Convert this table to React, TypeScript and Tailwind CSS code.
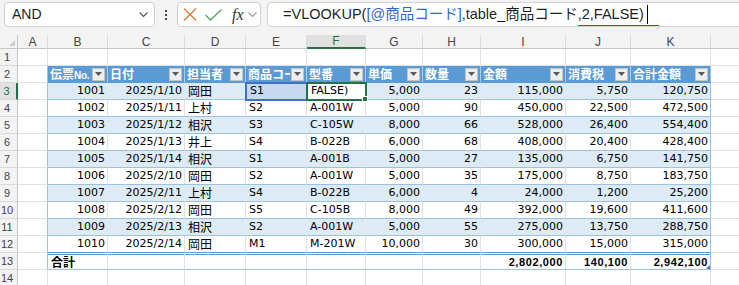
import React from 'react';

const cols = ['A', 'B', 'C', 'D', 'E', 'F', 'G', 'H', 'I', 'J', 'K', ''];

const headers = ['伝票', '日付', '担当者', '商品コード', '型番', '単価', '数量', '金額', '消費税', '合計金額'];

const data: string[][] = [
  ['1001', '2025/1/10', '岡田', 'S1', 'FALSE)', '5,000', '23', '115,000', '5,750', '120,750'],
  ['1002', '2025/1/11', '上村', 'S2', 'A-001W', '5,000', '90', '450,000', '22,500', '472,500'],
  ['1003', '2025/1/12', '相沢', 'S3', 'C-105W', '8,000', '66', '528,000', '26,400', '554,400'],
  ['1004', '2025/1/13', '井上', 'S4', 'B-022B', '6,000', '68', '408,000', '20,400', '428,400'],
  ['1005', '2025/1/14', '相沢', 'S1', 'A-001B', '5,000', '27', '135,000', '6,750', '141,750'],
  ['1006', '2025/2/10', '岡田', 'S2', 'A-001W', '5,000', '35', '175,000', '8,750', '183,750'],
  ['1007', '2025/2/11', '上村', 'S4', 'B-022B', '6,000', '4', '24,000', '1,200', '25,200'],
  ['1008', '2025/2/12', '岡田', 'S5', 'C-105B', '8,000', '49', '392,000', '19,600', '411,600'],
  ['1009', '2025/2/13', '相沢', 'S2', 'A-001W', '5,000', '55', '275,000', '13,750', '288,750'],
  ['1010', '2025/2/14', '岡田', 'M1', 'M-201W', '10,000', '30', '300,000', '15,000', '315,000'],
];

const rightAligned = [true, true, false, false, false, true, true, true, true, true];

const emptyCell = 'bg-white border-r border-b border-r-[#e1e1e1] border-b-[#e1e1e1]';
const aTableCell = 'bg-white border-r border-b border-r-[#9bc2e6] border-b-[#e1e1e1]';

const colHdr =
  "flex items-center justify-center bg-[#f3f3f3] border-r border-b border-r-[#dadada] border-b-[#c6c6c6] text-[12px] text-[#444] font-[family-name:'Liberation_Sans',sans-serif]";
const colHdrActive =
  "flex items-center justify-center bg-[#e1e1e1] border-r border-b-2 border-r-[#dadada] border-b-[#217346] text-[12px] text-[#217346] font-[family-name:'Liberation_Sans',sans-serif]";

const rowHdr =
  "flex items-center justify-center pr-[3px] bg-[#f3f3f3] border-r border-b border-r-[#c6c6c6] border-b-[#dadada] text-[11px] text-[#444] font-[family-name:'Liberation_Sans',sans-serif]";
const rowHdrActive =
  "flex items-center justify-center pr-[3px] bg-[#e1e1e1] border-r-2 border-b border-r-[#217346] border-b-[#dadada] text-[11px] text-[#217346] font-[family-name:'Liberation_Sans',sans-serif]";

function dataCls(band: boolean, last: boolean, rowBottom: string) {
  if (rowBottom === 'strong') {
    if (last) return band ? 'bg-[#ddebf7] border-r border-b border-r-[#9bc2e6] border-b-[#5b9bd5]' : 'bg-white border-r border-b border-r-[#9bc2e6] border-b-[#5b9bd5]';
    return band ? 'bg-[#ddebf7] border-r border-b border-r-[#ddebf7] border-b-[#5b9bd5]' : 'bg-white border-r border-b border-r-[#e1e1e1] border-b-[#5b9bd5]';
  }
  if (last) return band ? 'bg-[#ddebf7] border-r border-b border-r-[#9bc2e6] border-b-[#9bc2e6]' : 'bg-white border-r border-b border-r-[#9bc2e6] border-b-[#9bc2e6]';
  return band ? 'bg-[#ddebf7] border-r border-b border-r-[#ddebf7] border-b-[#9bc2e6]' : 'bg-white border-r border-b border-r-[#e1e1e1] border-b-[#9bc2e6]';
}

function FilterButton() {
  return (
    <div className="shrink-0 ml-auto w-[13px] h-[13px] bg-[#eeeeee] border border-[#c4c4c4] flex items-center justify-center">
      <svg width="7" height="4" viewBox="0 0 7 4">
        <polygon points="0,0 7,0 3.5,4" fill="#5a5a5a" />
      </svg>
    </div>
  );
}

function Sheet() {
  const cells: React.ReactNode[] = [];
  cells.push(
    <div key="corner" className="bg-[#f3f3f3] border-r border-b border-r-[#c6c6c6] border-b-[#c6c6c6] flex items-end justify-end pr-[2px] pb-[2px]">
      <svg width="6" height="6" viewBox="0 0 6 6">
        <polygon points="6,0 6,6 0,6" fill="#cfcfcf" />
      </svg>
    </div>
  );
  cols.forEach((c, i) => {
    cells.push(
      <div key={'ch' + i} className={c === 'F' ? colHdrActive : colHdr}>
        {c}
      </div>
    );
  });

  for (let r = 1; r <= 14; r++) {
    cells.push(
      <div key={'rh' + r} className={r === 3 ? rowHdrActive : rowHdr}>
        {r}
      </div>
    );
    cells.push(<div key={'a' + r} className={r >= 2 && r <= 13 ? aTableCell : emptyCell} />);

    for (let c = 0; c < 10; c++) {
      const key = 'c' + r + '-' + c;
      const last = c === 9;
      if (r === 1 || r === 14) {
        cells.push(<div key={key} className={emptyCell} />);
      } else if (r === 2) {
        cells.push(
          <div
            key={key}
            className={
              last
                ? 'flex items-center gap-[1px] pl-[2px] pr-[2px] bg-[#5b9bd5] border-r border-b border-r-[#9bc2e6] border-b-[#5b9bd5] overflow-hidden'
                : 'flex items-center gap-[1px] pl-[2px] pr-[2px] bg-[#5b9bd5] border-r border-b border-r-[#a9cbec] border-b-[#5b9bd5] overflow-hidden'
            }
          >
            {c === 3 ? (
              <span className="flex-1 min-w-0 overflow-hidden whitespace-nowrap text-[12px] font-bold text-white font-[family-name:'Noto_Sans_CJK_JP',sans-serif]">
                {headers[c]}
              </span>
            ) : (
              <span className="whitespace-nowrap text-[12px] font-bold text-white font-[family-name:'Noto_Sans_CJK_JP',sans-serif]">
                {headers[c]}
                {c === 0 && (
                  <span className="text-[10px] tracking-[-0.3px] font-[family-name:'Liberation_Sans',sans-serif]">No.</span>
                )}
              </span>
            )}
            <FilterButton />
          </div>
        );
      } else if (r >= 3 && r <= 12) {
        const band = r % 2 === 1;
        const v = data[r - 3][c];
        const base = dataCls(band, last, r === 12 ? 'strong' : 'normal');
        const alignCls = rightAligned[c]
          ? 'flex items-center justify-end pr-[2px] whitespace-nowrap'
          : 'flex items-center pl-[3px] whitespace-nowrap';
        const isName = c === 2;
        if (r === 3 && c === 3) {
          cells.push(
            <div key={key} className="relative z-10 flex items-center pl-[4px] bg-[#c6d9f1] border-r border-b border-r-[#c6d9f1] border-b-[#9bc2e6] outline-2 -outline-offset-1 outline-[#3f6fc6]">
              <span className="text-[11px] text-black font-[family-name:'DejaVu_Sans',sans-serif]">{v}</span>
            </div>
          );
        } else if (r === 3 && c === 4) {
          cells.push(
            <div key={key} className="relative z-20 flex items-center pl-[4px] bg-white border-r border-b border-r-[#e1e1e1] border-b-[#9bc2e6] outline-2 -outline-offset-1 outline-[#217346]">
              <span className="text-[11px] text-black font-[family-name:'DejaVu_Sans',sans-serif]">{v}</span>
              <span className="absolute -right-[3px] -bottom-[3px] w-[6px] h-[6px] bg-[#217346] border border-white" />
            </div>
          );
        } else {
          cells.push(
            <div key={key} className={base + ' ' + alignCls}>
              {isName ? (
                <span className="text-[12px] text-black font-[family-name:'Noto_Sans_CJK_JP',sans-serif]">{v}</span>
              ) : (
                <span className="text-[11px] text-black font-[family-name:'DejaVu_Sans',sans-serif]">{v}</span>
              )}
            </div>
          );
        }
      } else if (r === 13) {
        const totals: Record<number, string> = { 7: '2,802,000', 8: '140,100', 9: '2,942,100' };
        const cls = last
          ? 'relative flex items-center justify-end pt-[2px] pr-[2px] bg-white border-r border-b border-r-[#9bc2e6] border-b-[#9bc2e6] shadow-[inset_0_1px_0_#ffffff,inset_0_2px_0_#5b9bd5]'
          : c === 0
          ? 'flex items-center pt-[2px] pl-[3px] bg-white border-r border-b border-r-[#e1e1e1] border-b-[#9bc2e6] shadow-[inset_0_1px_0_#ffffff,inset_0_2px_0_#5b9bd5]'
          : 'flex items-center justify-end pt-[2px] pr-[2px] bg-white border-r border-b border-r-[#e1e1e1] border-b-[#9bc2e6] shadow-[inset_0_1px_0_#ffffff,inset_0_2px_0_#5b9bd5]';
        cells.push(
          <div key={key} className={cls}>
            {c === 0 && (
              <span className="text-[12px] font-bold text-black font-[family-name:'Noto_Sans_CJK_JP',sans-serif]">合計</span>
            )}
            {totals[c] && (
              <span className="text-[11px] font-bold tracking-[0.6px] text-black font-[family-name:'Liberation_Sans',sans-serif]">
                {totals[c]}
              </span>
            )}
            {last && (
              <svg className="absolute right-0 bottom-0" width="4" height="4" viewBox="0 0 4 4">
                <polygon points="4,0 4,4 0,4" fill="#3f6fc6" />
              </svg>
            )}
          </div>
        );
      }
    }
    cells.push(<div key={'l' + r} className={emptyCell} />);
  }

  return (
    <div className="grid grid-cols-[18px_30px_60px_77px_61px_61px_59px_57px_58px_85px_65px_80px_72px] grid-rows-[14px_repeat(14,17px)] w-[783px]">
      {cells}
    </div>
  );
}

function FormulaBar() {
  return (
    <div className="h-[35px] bg-[#f3f3f3] flex items-start pt-[2px] pl-[4px]">
      <div className="shrink-0 w-[151px] h-[25px] bg-white border border-[#d1d1d1] rounded-[4px] flex items-center pl-[7px] pr-[6px]">
        <span className="flex-1 text-[14px] text-[#1f1f1f] font-[family-name:'Liberation_Sans',sans-serif]">AND</span>
        <svg width="9" height="6" viewBox="0 0 9 6">
          <polyline points="0.5,0.5 4.5,4.5 8.5,0.5" fill="none" stroke="#555" strokeWidth="1.1" />
        </svg>
      </div>
      <div className="shrink-0 w-[22px] h-[25px] flex flex-col items-center justify-center gap-[2px]">
        <span className="w-[2px] h-[2px] bg-[#444]" />
        <span className="w-[2px] h-[2px] bg-[#444]" />
        <span className="w-[2px] h-[2px] bg-[#444]" />
      </div>
      <div className="shrink-0 w-[84px] h-[25px] bg-white border border-[#d1d1d1] rounded-[4px] flex items-center pl-[5px]">
        <svg width="14" height="13" viewBox="0 0 14 13">
          <line x1="1" y1="0.5" x2="13" y2="12.5" stroke="#d7782f" strokeWidth="1.3" />
          <line x1="13" y1="0.5" x2="1" y2="12.5" stroke="#d7782f" strokeWidth="1.3" />
        </svg>
        <svg className="ml-[8px]" width="17" height="12" viewBox="0 0 17 12">
          <polyline points="0.5,6 5.5,11 16.5,0.5" fill="none" stroke="#4fa860" strokeWidth="1.3" />
        </svg>
        <span className="ml-[10px] text-[16px] italic text-[#333] leading-none font-[family-name:'Liberation_Serif',serif]">fx</span>
        <svg className="ml-[4px]" width="9" height="5" viewBox="0 0 9 5">
          <polyline points="0.5,0.5 4.5,4.5 8.5,0.5" fill="none" stroke="#9a9a9a" strokeWidth="1.1" />
        </svg>
      </div>
      <div className="shrink-0 ml-[6px] w-[600px] h-[25px] bg-white border border-[#d1d1d1] rounded-[4px] flex items-center pl-[15px] whitespace-nowrap text-[14.5px] text-[#1f1f1f] font-[family-name:'Liberation_Sans','Noto_Sans_CJK_JP',sans-serif]">
        <span>=VLOOKUP(</span>
        <span className="text-[#3366cc]">[@商品コード]</span>
        <span>,table_商品コード</span>
        <span className="inline-flex items-center border-b border-[#e0201c] pr-[11px] h-[22px] mt-[1px]">
          <span>,2,FALSE)</span>
          <span className="ml-[3px] w-[1.5px] h-[19px] bg-black" />
        </span>
      </div>
    </div>
  );
}

export default function App() {
  return (
    <div className="w-[739px] h-[285px] overflow-hidden bg-white">
      <FormulaBar />
      <Sheet />
    </div>
  );
}
